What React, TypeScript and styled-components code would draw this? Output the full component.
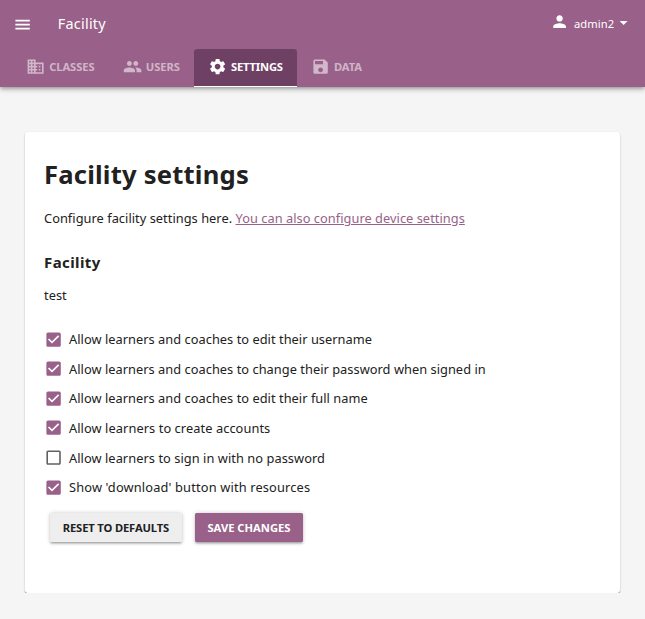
import React from 'react';
import styled, { createGlobalStyle, css } from 'styled-components';

const GlobalStyle = createGlobalStyle`
  *, *::before, *::after { box-sizing: border-box; }
  html { background: #f5f5f5; }
  body {
    margin: 0;
    color: #212121;
    font-family: 'Noto Sans', sans-serif;
    font-size: 12.8px;
    letter-spacing: 0.04px;
  }
`;

const paths = {
  menu: 'M3 18h18v-2H3v2zm0-5h18v-2H3v2zm0-7v2h18V6H3z',
  classes:
    'M12 7V3H2v18h20V7H12zM6 19H4v-2h2v2zm0-4H4v-2h2v2zm0-4H4V9h2v2zm0-4H4V5h2v2zm4 12H8v-2h2v2zm0-4H8v-2h2v2zm0-4H8V9h2v2zm0-4H8V5h2v2zm10 12h-8v-2h2v-2h-2v-2h2v-2h-2V9h8v10zm-2-8h-2v2h2v-2zm0 4h-2v2h2v-2z',
  users:
    'M16 11c1.66 0 2.99-1.34 2.99-3S17.66 5 16 5c-1.66 0-3 1.34-3 3s1.34 3 3 3zm-8 0c1.66 0 2.99-1.34 2.99-3S9.66 5 8 5C6.34 5 5 6.34 5 8s1.34 3 3 3zm0 2c-2.33 0-7 1.17-7 3.5V19h14v-2.5c0-2.33-4.67-3.5-7-3.5zm8 0c-.29 0-.62.02-.97.05 1.16.84 1.97 1.97 1.97 3.45V19h6v-2.5c0-2.33-4.67-3.5-7-3.5z',
  settings:
    'M19.14 12.94c.04-.3.06-.61.06-.94 0-.32-.02-.64-.07-.94l2.03-1.58c.18-.14.23-.41.12-.61l-1.92-3.32c-.12-.22-.37-.29-.59-.22l-2.39.96c-.5-.38-1.03-.7-1.62-.94l-.36-2.54c-.04-.24-.24-.41-.48-.41h-3.84c-.24 0-.43.17-.47.41l-.36 2.54c-.59.24-1.13.57-1.62.94l-2.39-.96c-.22-.08-.47 0-.59.22L2.74 8.87c-.12.21-.08.47.12.61l2.03 1.58c-.05.3-.09.63-.09.94s.02.64.07.94l-2.03 1.58c-.18.14-.23.41-.12.61l1.92 3.32c.12.22.37.29.59.22l2.39-.96c.5.38 1.03.7 1.62.94l.36 2.54c.05.24.24.41.48.41h3.84c.24 0 .44-.17.47-.41l.36-2.54c.59-.24 1.13-.56 1.62-.94l2.39.96c.22.08.47 0 .59-.22l1.92-3.32c.12-.22.07-.47-.12-.61l-2.01-1.58zM12 15.6c-1.98 0-3.6-1.62-3.6-3.6s1.62-3.6 3.6-3.6 3.6 1.62 3.6 3.6-1.62 3.6-3.6 3.6z',
  save: 'M17 3H5c-1.11 0-2 .9-2 2v14c0 1.1.89 2 2 2h14c1.1 0 2-.9 2-2V7l-4-4zm-5 16c-1.66 0-3-1.34-3-3s1.34-3 3-3 3 1.34 3 3-1.34 3-3 3zm3-10H5V5h10v4z',
  person:
    'M12 12c2.21 0 4-1.79 4-4s-1.79-4-4-4-4 1.79-4 4 1.79 4 4 4zm0 2c-2.67 0-8 1.34-8 4v2h16v-2c0-2.66-5.33-4-8-4z',
  dropdown: 'M7 10l5 5 5-5z',
  checked:
    'M19 3H5c-1.11 0-2 .9-2 2v14c0 1.1.89 2 2 2h14c1.11 0 2-.9 2-2V5c0-1.1-.89-2-2-2zm-9 14l-5-5 1.41-1.41L10 14.17l7.59-7.59L19 8l-9 9z',
  unchecked:
    'M19 5v14H5V5h14m0-2H5c-1.1 0-2 .9-2 2v14c0 1.1.9 2 2 2h14c1.1 0 2-.9 2-2V5c0-1.1-.9-2-2-2z',
};

type IconName = keyof typeof paths;

const Svg = styled.svg`
  display: block;
  flex: none;
  width: 19.2px;
  height: 19.2px;
  fill: currentColor;
`;

const Icon = ({ name }: { name: IconName }) => (
  <Svg viewBox="0 0 24 24" aria-hidden="true">
    <path d={paths[name]} />
  </Svg>
);

const Header = styled.header`
  height: 87px;
  color: #fff;
  background: #996189;
  box-shadow: 0 1.6px 3.2px -0.8px rgba(0, 0, 0, 0.2), 0 3.2px 4px rgba(0, 0, 0, 0.14),
    0 0.8px 8px rgba(0, 0, 0, 0.12);
`;

const Toolbar = styled.div`
  display: flex;
  align-items: center;
  height: 49px;
  padding: 0 11.5px 0 13px;
`;

const MenuButton = styled.button`
  display: flex;
  padding: 0;
  border: 0;
  color: inherit;
  background: none;
`;

const Title = styled.div`
  flex: 1;
  margin: -2px 0 0 25.6px;
  font-size: 14.4px;
  line-height: 20px;
  letter-spacing: 0.25px;
`;

const UserButton = styled.button`
  display: flex;
  align-items: center;
  margin-top: -3px;
  padding: 0;
  border: 0;
  color: inherit;
  background: none;
  font: 11.2px/19px 'Noto Sans', sans-serif;
  letter-spacing: 0.1px;

  svg:first-child {
    margin: -2px 4.8px 0 0;
  }
`;

const Tabs = styled.nav`
  display: flex;
  height: 38px;
  padding-left: 12.2px;
`;

const Tab = styled.a<{ $active?: boolean }>`
  display: flex;
  align-items: center;
  gap: 3.6px;
  padding: 0 14.2px 2px;
  border-bottom: 1px solid transparent;
  border-radius: 3.2px 3.2px 0 0;
  color: rgba(255, 255, 255, 0.55);
  font-size: 11.2px;
  font-weight: 700;
  letter-spacing: -0.07px;
  text-transform: uppercase;
  ${({ $active }) =>
    $active &&
    css`
      color: #fff;
      background: #6e4064;
      border-bottom-color: #fff;
      letter-spacing: -0.18px;
    `}
`;

const Card = styled.main`
  height: 461px;
  margin: 45px 25px 0;
  padding: 24px 19px;
  background: #fff;
  border-radius: 3px;
  box-shadow: 0 1px 2px rgba(0, 0, 0, 0.22), 0 1px 1px rgba(0, 0, 0, 0.18),
    0 1px 0 rgba(0, 0, 0, 0.12);
`;

const Heading = styled.h1`
  margin: 0;
  font-size: 25.6px;
  line-height: 38px;
  letter-spacing: 0.2px;
`;

const Paragraph = styled.p`
  margin: 15px 0 0;
  line-height: 19px;
`;

const Link = styled.a`
  color: #996189;
  text-decoration: underline;
`;

const Subheading = styled.h2`
  margin: 23px 0 0;
  font-size: 15px;
  line-height: 22px;
  letter-spacing: 0.4px;
`;

const FacilityName = styled.p`
  margin: 13px 0 0;
  line-height: 19px;
`;

const Options = styled.div`
  display: grid;
  grid-auto-rows: 29.6px;
  margin-top: 19.4px;
`;

const Option = styled.div<{ $checked: boolean; $tracking?: number }>`
  display: flex;
  align-items: center;
  gap: 5.8px;
  letter-spacing: ${({ $tracking = 0.04 }) => $tracking}px;

  svg {
    color: ${({ $checked }) => ($checked ? '#996189' : '#616161')};
  }
`;

const Actions = styled.div`
  display: flex;
  gap: 13px;
  margin: 10.6px 0 0 6px;
`;

const Button = styled.button<{ $primary?: boolean }>`
  height: 29px;
  padding: 0 ${({ $primary }) => ($primary ? 12.6 : 12.8)}px;
  border: 0;
  border-radius: 1.6px;
  color: ${({ $primary }) => ($primary ? '#fff' : '#212121')};
  background: ${({ $primary }) => ($primary ? '#996189' : '#eee')};
  font: 700 11.2px/29px 'Noto Sans', sans-serif;
  letter-spacing: ${({ $primary }) => ($primary ? 0 : -0.14)}px;
  text-transform: uppercase;
  box-shadow: 0 0.8px 4px rgba(0, 0, 0, 0.2), 0 1.6px 1.6px rgba(0, 0, 0, 0.14),
    0 2.4px 0.8px -1.6px rgba(0, 0, 0, 0.12);
`;

const tabs: { icon: IconName; label: string; active?: boolean }[] = [
  { icon: 'classes', label: 'Classes' },
  { icon: 'users', label: 'Users' },
  { icon: 'settings', label: 'Settings', active: true },
  { icon: 'save', label: 'Data' },
];

const options: { label: string; checked: boolean; tracking?: number }[] = [
  { label: 'Allow learners and coaches to edit their username', checked: true },
  { label: 'Allow learners and coaches to change their password when signed in', checked: true },
  { label: 'Allow learners and coaches to edit their full name', checked: true },
  { label: 'Allow learners to create accounts', checked: true, tracking: 0.08 },
  { label: 'Allow learners to sign in with no password', checked: false, tracking: 0.06 },
  { label: "Show 'download' button with resources", checked: true, tracking: 0.16 },
];

export default function App() {
  return (
    <>
      <GlobalStyle />
      <Header>
        <Toolbar>
          <MenuButton aria-label="Menu">
            <Icon name="menu" />
          </MenuButton>
          <Title>Facility</Title>
          <UserButton>
            <Icon name="person" />
            admin2
            <Icon name="dropdown" />
          </UserButton>
        </Toolbar>
        <Tabs>
          {tabs.map(({ icon, label, active }) => (
            <Tab key={label} $active={active}>
              <Icon name={icon} />
              {label}
            </Tab>
          ))}
        </Tabs>
      </Header>
      <Card>
        <Heading>Facility settings</Heading>
        <Paragraph>
          Configure facility settings here. <Link>You can also configure device settings</Link>
        </Paragraph>
        <Subheading>Facility</Subheading>
        <FacilityName>test</FacilityName>
        <Options>
          {options.map(({ label, checked, tracking }) => (
            <Option
              key={label}
              $checked={checked}
              $tracking={tracking}
              role="checkbox"
              aria-checked={checked}
            >
              <Icon name={checked ? 'checked' : 'unchecked'} />
              {label}
            </Option>
          ))}
        </Options>
        <Actions>
          <Button>Reset to defaults</Button>
          <Button $primary>Save changes</Button>
        </Actions>
      </Card>
    </>
  );
}
